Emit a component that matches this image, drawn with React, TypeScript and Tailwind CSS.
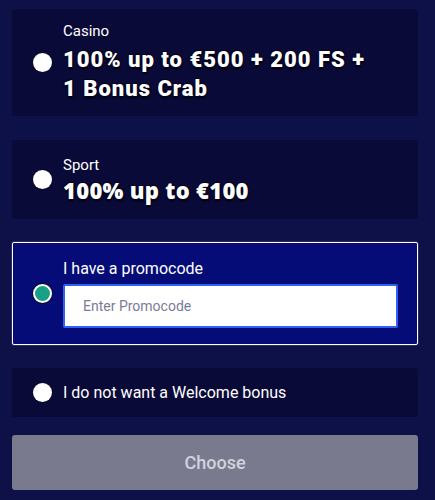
import React from "react";

function Radio({ checked }: { checked?: boolean }) {
  return checked ? (
    <div className="w-[19px] h-[19px] shrink-0 rounded-full bg-[#16a085] border-2 border-white shadow-[0_0_0_1px_#0a0a30]" />
  ) : (
    <div className="w-[19px] h-[19px] shrink-0 rounded-full bg-white shadow-[0_0_0_1px_#0a0a30]" />
  );
}

export default function App() {
  const titleShadow =
    "[text-shadow:1px_1px_0_#05051e,-1px_-1px_0_#05051e,1px_-1px_0_#05051e,-1px_1px_0_#05051e,0_2px_2px_#000]";
  return (
    <div
      className="w-[435px] h-[500px] bg-[#0e1048] pt-[9px] pl-3 flex flex-col"
      style={{ fontFamily: "Roboto, 'Liberation Sans', sans-serif" }}
    >
      <div className="w-[406px] flex flex-col">
        <div className="h-[107px] bg-[#0a0a38] rounded-[3px] flex items-center pl-[21px] gap-[11px]">
          <Radio />
          <div className="flex flex-col text-white">
            <div className="text-[15px] leading-[18px] mb-[5px]">Casino</div>
            <div className={`text-[22px] leading-[29px] font-black tracking-[1px] ${titleShadow}`}>
              100% up to €500 + 200 FS +<br />1 Bonus Crab
            </div>
          </div>
        </div>

        <div className="mt-[24px] h-[79px] bg-[#0a0a38] rounded-[3px] flex items-center pl-[21px] gap-[11px]">
          <Radio />
          <div className="flex flex-col text-white">
            <div className="text-[15px] leading-[18px] mb-[2px]">Sport</div>
            <div
              className={`text-[22px] leading-[28px] font-extrabold tracking-[0.3px] ${titleShadow}`}
              style={{ fontFamily: "'Open Sans', sans-serif" }}
            >
              100% up to €100
            </div>
          </div>
        </div>

        <div className="mt-[23px] h-[103px] bg-[#050c78] rounded-[2px] border border-white shadow-[0_0_0_1px_#2a2a60] flex items-center pl-[20px] gap-[11px]">
          <Radio checked />
          <div className="flex flex-col flex-1 pr-[19px]">
            <div className="text-white text-[16px] leading-[20px] mb-[5px]">I have a promocode</div>
            <div className="h-[44px] bg-white border-2 border-[#2f5ff5] rounded-[2px] flex items-center pl-[18px] text-[14px] text-[#7b7b99]">
              Enter Promocode
            </div>
          </div>
        </div>

        <div className="mt-[23px] h-[49px] bg-[#0a0a38] rounded-[3px] flex items-center pl-[21px] gap-[11px]">
          <Radio />
          <div className="text-white text-[16px]">I do not want a Welcome bonus</div>
        </div>

        <div className="mt-[18px] h-[55px] bg-[#7a7a8e] rounded-[3px] flex items-center justify-center text-[#d2d2de] text-[18px] font-medium">
          Choose
        </div>
      </div>
    </div>
  );
}
